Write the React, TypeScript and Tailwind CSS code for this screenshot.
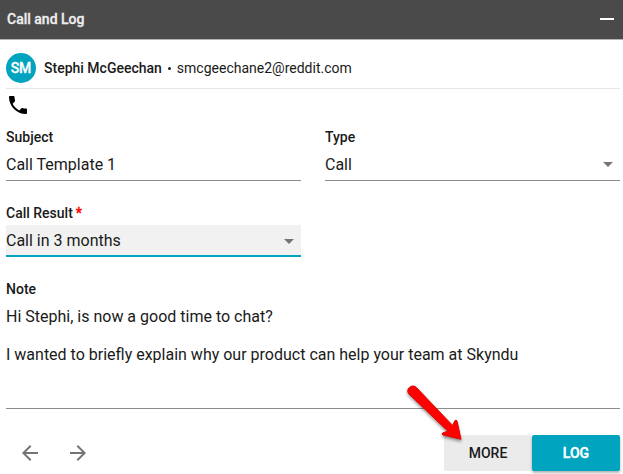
import type { ReactNode } from 'react';

function Caret() {
  return (
    <svg className="mr-[7px] h-[5px] w-[10px] shrink-0" viewBox="0 0 10 5">
      <path d="M0 0h10L5 5z" fill="#757575" />
    </svg>
  );
}

function Label({ children }: { children: ReactNode }) {
  return <div className="h-4 text-[14px] leading-4 font-medium whitespace-nowrap">{children}</div>;
}

function PointerArrow() {
  return (
    <svg
      className="absolute left-[395px] top-[375px] h-[75px] w-[85px] drop-shadow-[0_2px_1.5px_rgba(0,0,0,0.4)]"
      viewBox="0 0 85 75"
    >
      <path
        d="M14.3 12.6a4.900 4.900 0 0 1 7.100-.2L57.600 50.400l2.300-4.700q1.300-1.600 2.200.5L66 64.300 48.300 60.100q-2.200-1-.6-2.200l5.200-1.700L14.100 19.200a4.900 4.900 0 0 1 .2-6.600z"
        fill="#fe0000"
        stroke="#d80a05"
        strokeWidth="1"
        strokeLinejoin="round"
      />
    </svg>
  );
}

export default function App() {
  return (
    <div className="relative flex h-[474px] w-[623px] flex-col overflow-hidden bg-white font-[Roboto,sans-serif] text-[#1a1a1a]">
      <header className="flex h-10 shrink-0 items-center justify-between border-b border-[#b3b3b3] bg-[#4a4a4a] pl-[7px] pr-[9px]">
        <h1 className="mb-0.5 text-[14px] leading-4 font-medium text-[#eeeeee] [-webkit-text-stroke:0.3px_#eeeeee]">
          Call and Log
        </h1>
        <button aria-label="Minimize" className="mb-px h-0.5 w-[14px] bg-white" />
      </header>

      <main className="flex flex-1 flex-col pl-1.5 pr-[3px]">
        <div className="flex h-[49px] shrink-0 items-center border-b border-[#e6e6e6] pt-2">
          <div className="mr-2 flex size-[30px] items-center justify-center rounded-full bg-[#00a4bf] text-[14px] font-medium text-white [-webkit-text-stroke:0.3px_white]">
            SM
          </div>
          <span className="text-[14px] font-medium">Stephi McGeechan</span>
          <span className="mx-[6px] size-[3px] rounded-full bg-[#212121]" />
          <span className="text-[14px]">smcgeechane2@reddit.com</span>
        </div>

        <svg className="mt-1 size-6 shrink-0" viewBox="0 0 24 24">
          <path d="M6.620 10.790c1.440 2.830 3.760 5.140 6.590 6.590l2.200-2.200c.27-.27.67-.36 1.020-.24 1.120.37 2.330.57 3.570.57.55 0 1 .45 1 1V20c0 .55-.45 1-1 1-9.390 0-17-7.610-17-17 0-.55.45-1 1-1h3.500c.55 0 1 .45 1 1 0 1.250.2 2.450.57 3.570.11.35.03.74-.25 1.020l-2.200 2.200z" />
        </svg>

        <div className="mt-3 grid shrink-0 grid-cols-2 gap-x-6">
          <div>
            <Label>Subject</Label>
            <div className="mt-1 flex h-8 items-center border-b border-[#8c8c8c] text-[16px]">Call Template 1</div>
          </div>
          <div>
            <Label>Type</Label>
            <div className="mt-1 flex h-8 items-center justify-between border-b border-[#8c8c8c] text-[16px]">
              Call
              <Caret />
            </div>
          </div>
          <div className="mt-6">
            <Label>
              Call Result
              <span className="ml-[3px] text-[#ff0000] [-webkit-text-stroke:0.4px_#ff0000]">*</span>
            </Label>
            <div className="mt-1 flex h-8 items-center justify-between border-b-2 border-[#00a4bf] bg-[#f1f1f1] pt-0.5 text-[16px]">
              Call in 3 months
              <Caret />
            </div>
          </div>
        </div>

        <div className="mt-6 flex h-32 shrink-0 flex-col border-b border-[#8c8c8c]">
          <Label>Note</Label>
          <p className="mt-[10px] text-[16px] leading-[19px] whitespace-pre-line">
            {'Hi Stephi, is now a good time to chat?\n\nI wanted to briefly explain why our product can help your team at Skyndu'}
          </p>
        </div>

        <footer className="mt-[26px] flex h-9 shrink-0 items-center">
          <svg className="ml-3 h-6 w-6" viewBox="0 0 24 24">
            <path d="M20 11H7.830l5.590-5.590L12 4l-8 8 8 8 1.410-1.410L7.830 13H20v-2z" fill="#757575" />
          </svg>
          <svg className="ml-6 h-6 w-6" viewBox="0 0 24 24">
            <path d="m12 4-1.410 1.410L16.170 11H4v2h12.170l-5.580 5.590L12 20l8-8z" fill="#757575" />
          </svg>
          <button className="ml-auto h-9 w-[88px] rounded-[2px] bg-[#ebebeb] text-[14px] font-medium">MORE</button>
          <button className="h-9 w-[88px] rounded-[2px] bg-[#00a4bf] text-[14px] font-medium text-white shadow-[0_2px_3px_rgba(0,0,0,0.3)] [-webkit-text-stroke:0.4px_white]">
            LOG
          </button>
        </footer>
      </main>
      <PointerArrow />
    </div>
  );
}
